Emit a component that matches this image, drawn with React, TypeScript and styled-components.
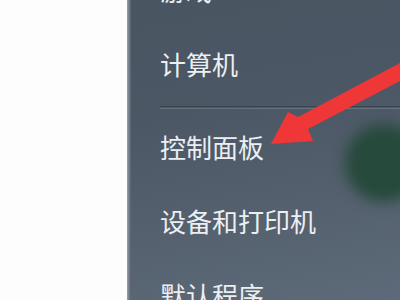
import styled, { createGlobalStyle } from 'styled-components'

const GlobalStyle = createGlobalStyle`
  html, body {
    margin: 0;
    padding: 0;
    background: #ffffff;
  }
  #root {
    width: 400px;
    height: 300px;
  }
`

const Screen = styled.div`
  position: relative;
  display: flex;
  width: 400px;
  height: 300px;
  overflow: hidden;
  background: #ffffff;
`

const Desktop = styled.div`
  width: 127px;
  flex-shrink: 0;
  background: #fdfdfd;
`

const PanelEdge = styled.div`
  width: 4px;
  flex-shrink: 0;
  background: linear-gradient(to right, #9aa1a9, #6d7784 60%, #56616d);
`

const Panel = styled.div`
  position: relative;
  flex: 1;
  padding-left: 29px;
  background: linear-gradient(170deg, #4a5562 0%, #4b5764 35%, #55616e 70%, #5d6a79 100%);
  overflow: hidden;
`

const MenuList = styled.ul`
  list-style: none;
  margin: -48px 0 0;
  padding: 0;
  display: flex;
  flex-direction: column;
`

const MenuItem = styled.li`
  height: 74px;
  display: flex;
  align-items: center;
  font-family: 'Noto Sans CJK SC', 'Noto Sans', sans-serif;
  font-size: 26px;
  color: #eceff2;
  white-space: nowrap;
`

// thin etched line between the two groups of entries
const Separator = styled.li`
  height: 9px;
  display: flex;
  align-items: flex-end;
  &::before {
    content: '';
    flex: 1;
    height: 1px;
    border-top: 1px solid #3b444f;
    border-bottom: 1px solid #66717e;
  }
`

const Glow = styled.div`
  position: absolute;
  left: 345px;
  top: 124px;
  width: 78px;
  height: 78px;
  border-radius: 50%;
  background: #264a3b;
  filter: blur(7px);
`

const ArrowLayer = styled.svg`
  position: absolute;
  left: 0;
  top: 0;
  width: 400px;
  height: 300px;
  pointer-events: none;
`

export default function App() {
  const items = ['游戏', '计算机', null, '控制面板', '设备和打印机', '默认程序']

  return (
    <>
      <GlobalStyle />
      <Screen>
        <Desktop />
        <PanelEdge />
        <Panel>
          <MenuList>
            {items.map((label, i) =>
              label ? <MenuItem key={i}>{label}</MenuItem> : <Separator key={i} />
            )}
          </MenuList>
        </Panel>
        <Glow />
        <ArrowLayer viewBox="0 0 400 300">
          <polygon
            points="271,144 288,112 298,117 402,62 402,80 308,129 313,141"
            fill="#f03737"
          />
        </ArrowLayer>
      </Screen>
    </>
  )
}
